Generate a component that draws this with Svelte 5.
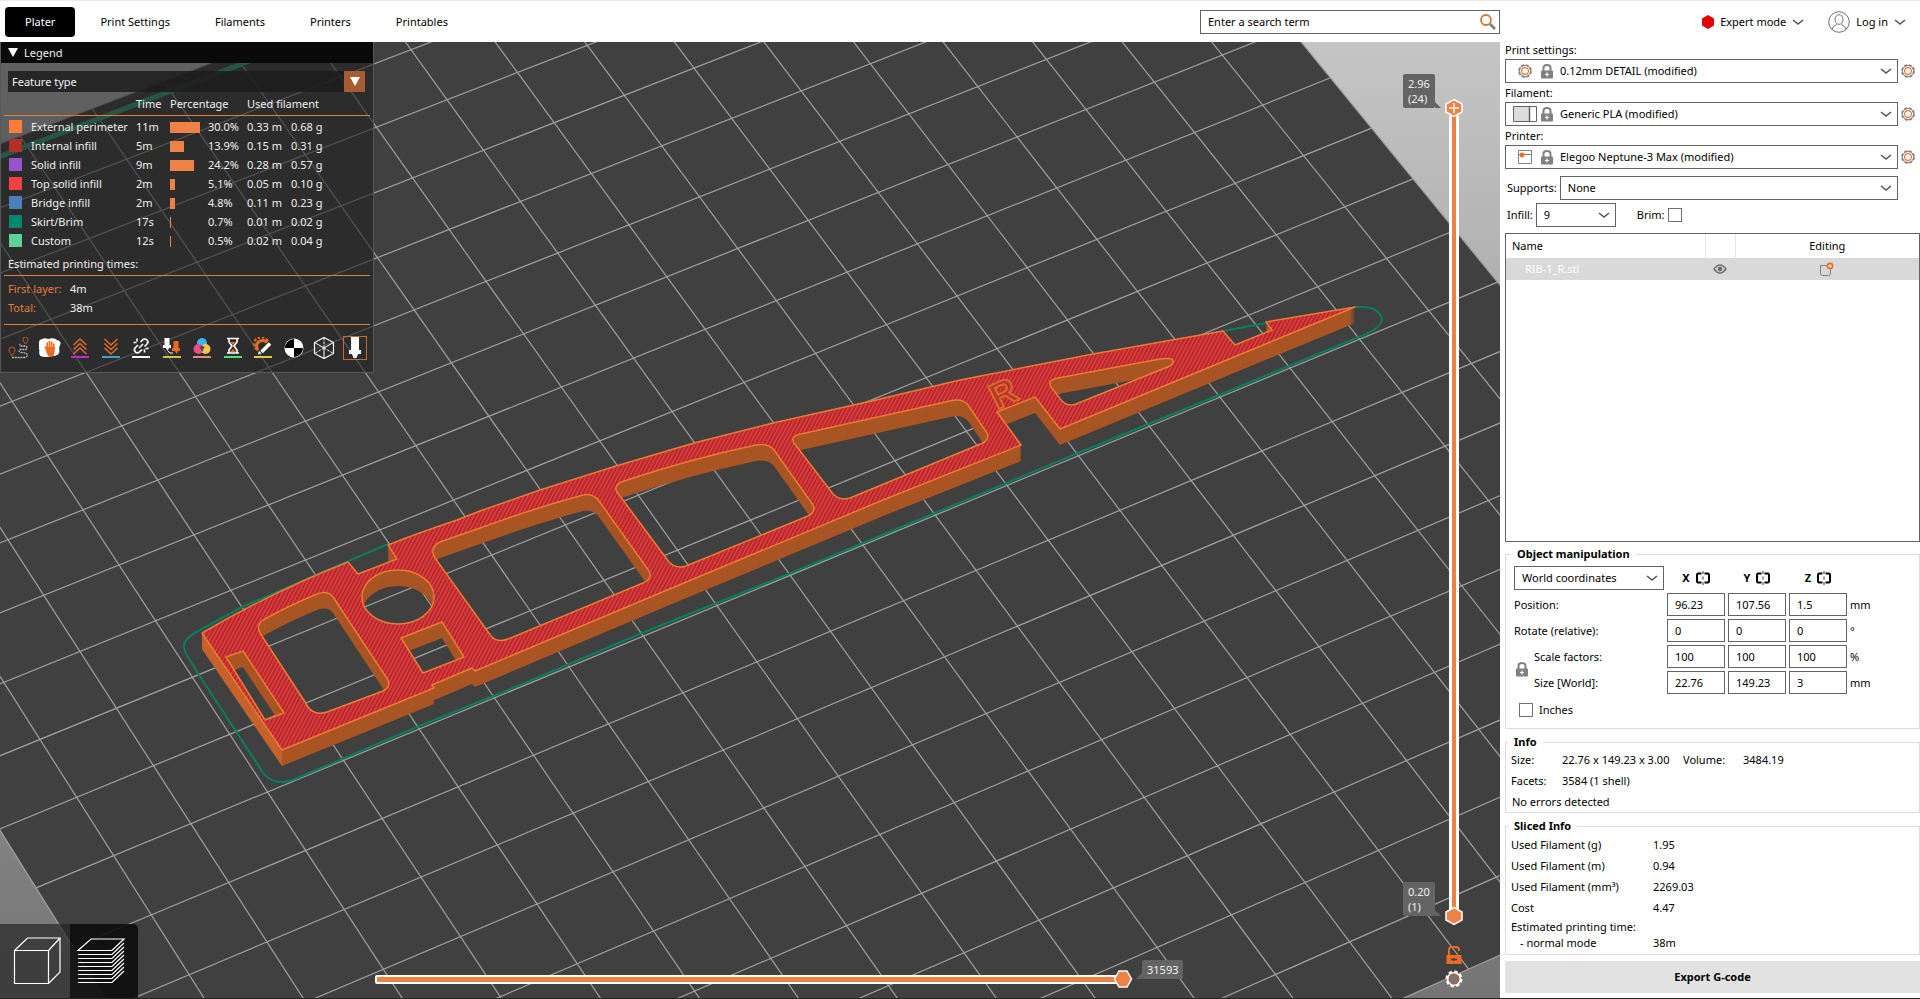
<script>
  const tabs = ['Plater', 'Print Settings', 'Filaments', 'Printers', 'Printables'];

  const features = [
    { color: '#ff7d38', name: 'External perimeter', time: '11m', pct: 30.0, len: '0.33 m', mass: '0.68 g' },
    { color: '#b1302a', name: 'Internal infill', time: '5m', pct: 13.9, len: '0.15 m', mass: '0.31 g' },
    { color: '#9654cc', name: 'Solid infill', time: '9m', pct: 24.2, len: '0.28 m', mass: '0.57 g' },
    { color: '#f04040', name: 'Top solid infill', time: '2m', pct: 5.1, len: '0.05 m', mass: '0.10 g' },
    { color: '#4d80ba', name: 'Bridge infill', time: '2m', pct: 4.8, len: '0.11 m', mass: '0.23 g' },
    { color: '#00876e', name: 'Skirt/Brim', time: '17s', pct: 0.7, len: '0.01 m', mass: '0.02 g' },
    { color: '#5ed194', name: 'Custom', time: '12s', pct: 0.5, len: '0.02 m', mass: '0.04 g' }
  ];

  const presets = [
    { id: 'print', label: 'Print settings:', value: '0.12mm DETAIL (modified)' },
    { id: 'filament', label: 'Filament:', value: 'Generic PLA (modified)' },
    { id: 'printer', label: 'Printer:', value: 'Elegoo Neptune-3 Max (modified)' }
  ];

  const transforms = [
    { name: 'Position', values: ['96.23', '107.56', '1.5'], unit: 'mm' },
    { name: 'Rotate', values: ['0', '0', '0'], unit: '°' },
    { name: 'Scale', values: ['100', '100', '100'], unit: '%' },
    { name: 'Size', values: ['22.76', '149.23', '3'], unit: 'mm' }
  ];
  const axes = ['X', 'Y', 'Z'];

  const sliced = [
    ['Used Filament (g)', '1.95'],
    ['Used Filament (m)', '0.94'],
    ['Used Filament (mm³)', '2269.03'],
    ['Cost', '4.47']
  ];

  // Perspective projection of bed cells (u to the right, v towards the viewer).
  function project(u, v) {
    const w = 1 + 0.003212 * u - 0.005672 * v;
    const x = (43.7 + 75.76 * u + 35.7 * v) / w;
    const y = (595.3 - 28.5 * u + 52.44 * v) / w;
    return `${x.toFixed(1)},${y.toFixed(1)}`;
  }
  const U = [-2, 18];
  const V = [-7, 13];
  const bed = `M${project(U[0], V[0])}L${project(U[1], V[0])}L${project(U[1], V[1])}L${project(U[0], V[1])}Z`;
  let grid = '';
  for (let u = U[0]; u <= U[1]; u++) grid += `M${project(u, V[0])}L${project(u, V[1])}`;
  for (let v = V[0]; v <= V[1]; v++) grid += `M${project(U[0], v)}L${project(U[1], v)}`;
  const purgeLine = `M${project(-2, -6.8)}L${project(16, -6.8)}`;

  const rib = [
    'M202,633 Q272,592 348,562 L358,574 L397,559 L388,545',
    'Q418,533 457,520 L480,511 L540,490 L616,466 L694,443 L773,423 L876,400 L960,380 L1093,354 L1223,331',
    'L1235,345 L1272,330 L1266,322 L1355,307',
    'L1060,429 L1035,397 L997,412 L1021,445 L883,500 L660,593 L475,671 L472,668 L432,685 L434,688 L282,750 Z',
    'M226,657 L243,651 L284,713 L265,720 Z',
    'M305,702 L260,633 Q256,625 263,620 Q290,605 317,594 Q328,590 333,597 L388,680 Q391,687 383,691 L327,712 Q314,716 307,706 Z',
    'M362,597 A36,27 0 1 1 434,597 A36,27 0 1 1 362,597 Z',
    'M401,638 L442,622 L464,657 L423,673 Z',
    'M435,558 Q429,548 440,542 L480,528 Q535,508 583,495 Q593,493 599,501 L649,571 Q653,579 643,583 L508,639 Q497,643 491,636 Z',
    'M617,492 Q613,485 624,481 Q690,459 756,445 Q768,443 774,450 L813,505 Q816,512 808,516 L686,566 Q676,569 669,562 Z',
    'M794,443 Q790,436 801,434 L950,401 Q962,398 968,405 L987,433 Q990,439 983,443 L850,498 Q840,501 833,494 Z',
    'M1051,387 Q1047,380 1058,378 L1160,359 Q1174,357 1173,362 Q1172,366 1165,368 L1076,404 Q1068,407 1062,401 Z'
  ].join(' ');
  const depth = Array.from({ length: 16 }, (_, i) => 16 - i);
  const skirt =
    'M388,544 L242,607 L200,630 Q184,638 184,646 Q184,652 190,660 L199,675 L260,768 Q268,783 284,782 Q292,781 300,777 L417,727 L520,685 L642,633 L791,573 L935,513 L1078,453 L1219,395 L1359,337 Q1382,328 1382,319 Q1378,305 1355,307 M1223,331 L1266,323';
</script>

{#snippet chevron()}
  <svg class="chev" width="12" height="8" viewBox="0 0 12 8" aria-hidden="true">
    <path d="M1 2l5 4 5-4" fill="none" stroke="#555" stroke-width="1.6" />
  </svg>
{/snippet}

{#snippet gear()}
  <svg width="16" height="16" viewBox="0 0 16 16" fill="none" aria-hidden="true">
    <circle cx="8" cy="8" r="6" stroke="#808080" stroke-width="1.8" stroke-dasharray="3.1 1.6" />
    <circle cx="8" cy="8" r="5.6" stroke="#888" stroke-width="1" />
    <path d="M8 4.4l2.6 1 1 2.6-1 2.6-2.6 1-2.6-1-1-2.6 1-2.6z" stroke="#ed6b21" stroke-width="1.1" />
  </svg>
{/snippet}

{#snippet lock()}
  <svg width="12" height="15" viewBox="0 0 12 15" aria-hidden="true">
    <path d="M2.5 7V3.6Q2.5 1 6 1t3.5 2.6V7" fill="none" stroke="#808080" stroke-width="2" />
    <rect y="6.5" width="12" height="8" rx="1" fill="#808080" />
    <path d="M6 8.5v4M4 10.5h4" stroke="#fff" stroke-width="1.2" />
  </svg>
{/snippet}

<div class="app">
  <header>
    <nav>
      {#each tabs as tab, i}
        <button class="tab" class:active={i === 0}>{tab}</button>
      {/each}
    </nav>
    <div class="search">
      <input type="text" aria-label="Search" value="Enter a search term" />
      <svg width="18" height="18" viewBox="0 0 18 18" fill="none" aria-hidden="true">
        <circle cx="7" cy="7" r="5" stroke="#dd7436" stroke-width="1.8" />
        <path d="M11 11l5 5" stroke="#808080" stroke-width="2.8" />
      </svg>
    </div>
    <div class="account">
      <button class="plain">
        <svg width="12" height="14" viewBox="0 0 12 14" aria-hidden="true"><path d="M6 0l6 3.5v7L6 14 0 10.5v-7z" fill="#e80000" /></svg>
        Expert mode {@render chevron()}
      </button>
      <button class="plain">
        <svg width="22" height="22" viewBox="0 0 22 22" fill="none" stroke="#707070" aria-hidden="true">
          <circle cx="11" cy="11" r="10.3" />
          <ellipse cx="11" cy="8.5" rx="4" ry="4.8" />
          <path d="M4 18.5q.5-3.5 4.7-5M18 18.5q-.5-3.500-4.7-5" />
        </svg>
        Log in {@render chevron()}
      </button>
    </div>
  </header>

  <main>
    <section class="canvas" aria-label="Preview">
      <svg class="scene" viewBox="0 42 1500 956" preserveAspectRatio="xMinYMin slice" aria-hidden="true">
        <defs>
          <linearGradient id="sky" x1="0" y1="0" x2="0" y2="1">
            <stop offset="0" stop-color="#c5c5c5" />
            <stop offset="1" stop-color="#747474" />
          </linearGradient>
          <pattern id="hatch" width="3.5" height="4" patternUnits="userSpaceOnUse" patternTransform="rotate(28)">
            <rect width="3.5" height="4" fill="#e23a3c" />
            <rect width="1.6" height="4" fill="#a6282b" />
          </pattern>
        </defs>
        <rect y="42" width="1500" height="956" fill="url(#sky)" />
        <path d={bed} fill="#404040" />
        <path d={grid} fill="none" stroke="#a0a0a0" stroke-width="1.2" />
        <path d={purgeLine} stroke="#2fa878" stroke-width="5" />
        <path d={skirt} fill="none" stroke="#087d62" stroke-width="2" />
        {#each depth as dy}
          <path d={rib} transform="translate(0 {dy})" fill="#a95524" fill-rule="evenodd" />
        {/each}
        <path d="M202,633 L282,750 V766 L202,649 Z" fill="#c4622a" />
        <path d={rib} fill="url(#hatch)" fill-rule="evenodd" stroke="#ec7a33" stroke-width="1.5" stroke-linejoin="round" />
        <text class="engraved" x="997" y="410" transform="rotate(-26 997 410)">R</text>
      </svg>

      <div class="legend">
        <button class="legend-head">
          <svg width="10" height="9" viewBox="0 0 10 9" aria-hidden="true"><path d="M0 0h10L5 9z" fill="#fff" /></svg>
          Legend
        </button>
        <div class="feature">
          <select aria-label="View type"><option>Feature type</option></select>
          <span class="drop"><svg width="10" height="9" viewBox="0 0 10 9" aria-hidden="true"><path d="M0 0h10L5 9z" fill="#fff" /></svg></span>
        </div>
        <table>
          <thead>
            <tr><th class="c1"></th><th class="c2">Time</th><th class="c3" colspan="2">Percentage</th><th colspan="2">Used filament</th></tr>
          </thead>
          <tbody>
            {#each features as f}
              <tr>
                <td class="c1"><span class="swatch" style="background:{f.color}"></span>{f.name}</td>
                <td class="c2">{f.time}</td>
                <td class="c3"><span class="bar" style="width:{Math.max(1, Math.round(f.pct))}px"></span></td>
                <td class="c4">{f.pct.toFixed(1)}%</td>
                <td class="c5">{f.len}</td>
                <td>{f.mass}</td>
              </tr>
            {/each}
          </tbody>
        </table>
        <p class="times-title">Estimated printing times:</p>
        <dl>
          <dt>First layer:</dt><dd>4m</dd>
          <dt>Total:</dt><dd>38m</dd>
        </dl>
        <div class="tools">
          <button aria-label="Travel">
            <svg width="22" height="22" viewBox="0 0 22 22" fill="none">
              <path d="M4 19q-3-4-3-6a3 3 0 0 1 6 0q0 2-3 6zM17.5 7q-2.5-3-2.5-4.5a2.5 2.5 0 0 1 5 0Q20 4 17.5 7z" stroke="#c45a24" />
              <path d="M4 20.5h13q3-1 2-3.5-1-1.5-7-1.5-2-2 0-3h6q2-2 0-3.5h-5q-2-1-.5-2" stroke="#bbb" stroke-width="1.300" stroke-dasharray="2 .8" />
            </svg>
          </button>
          <button aria-label="Wipe">
            <svg width="22" height="22" viewBox="0 0 22 22">
              <path d="M1 3q4-3 8-1 6-2 9 1 4 1 3.500 4-2 4-1 7 0 5-7 5-8 2-12 0-2-2-1-6Q-2 7 1 3z" fill="#fff" />
              <path d="M7 13l-2-3.500q1.200-1 3 1.500v0z" fill="#ed6b21" />
              <path d="M8.200 12V6M10.400 12V4.500M12.600 12V5M14.800 12V7" stroke="#ed6b21" stroke-width="1.700" stroke-linecap="round" />
              <path d="M6.500 12l1-2h8.200v4.500Q15 20 11.500 20 8.500 20 6.500 12z" fill="#ed6b21" />
            </svg>
          </button>
          <button aria-label="Retractions">
            <svg width="22" height="22" viewBox="0 0 22 22" fill="none"><path d="M4.500 8L11 2l6.500 6M4.500 12.500L11 6.500l6.500 6M4.500 17L11 11l6.500 6" stroke="#e06a24" stroke-width="1.600" /><path d="M2 20h18" stroke="#c32ac3" stroke-width="2" /></svg>
          </button>
          <button aria-label="Deretractions">
            <svg width="22" height="22" viewBox="0 0 22 22" fill="none"><path d="M4.500 2L11 8l6.500-6M4.500 6.500L11 12.500l6.500-6M4.500 11L11 17l6.500-6" stroke="#e06a24" stroke-width="1.600" /><path d="M2 20h18" stroke="#44a4c6" stroke-width="2" /></svg>
          </button>
          <button aria-label="Seams">
            <svg width="22" height="22" viewBox="0 0 22 22" fill="none" stroke="#fff" stroke-width="1.600"><path d="M10.500 5l2-2a3 3 0 0 1 4.500 4l-2.500 2.500M8 8L5.500 10.500a3 3 0 0 0 4 4.500l2.500-2.500M9 11l4-4M7 1.500v3M3.500 5.500h3M14.500 12.500v3M15.500 11.500h3" /><path d="M2 20h18" stroke-width="2" /></svg>
          </button>
          <button aria-label="Tool changes">
            <svg width="22" height="22" viewBox="0 0 22 22"><path d="M3.500 1h5v7h1.500v3H8L6.500 14 5 11H2V8h1.500z" fill="#fff" /><path d="M12.500 4h5v7H19v3h-2l-1.500 3-1.500-3h-3v-3h1.500z" fill="#ed6b21" /><path d="M7 14q1 3 5 2" fill="none" stroke="#fff" /><path d="M2 20h18" stroke="#d1c43c" stroke-width="2" /></svg>
          </button>
          <button aria-label="Color changes">
            <svg width="22" height="22" viewBox="0 0 22 22"><circle cx="11" cy="6" r="5" fill="#3eb4ee" /><circle cx="7.500" cy="12" r="5" fill="#ee4a8c" /><circle cx="14.500" cy="12" r="5" fill="#f4c64a" /><path d="M11 8.500l2.500 1.500-2.500 5.500L8.500 10z" fill="#594a44" /><path d="M2 20h18" stroke="#e38d81" stroke-width="2" /></svg>
          </button>
          <button aria-label="Print pauses">
            <svg width="22" height="22" viewBox="0 0 22 22" fill="none"><path d="M5 1.500h12M5 16h12M7 2v3l3 4-3 4v3M15 2v3l-3 4 3 4v3" stroke="#fff" stroke-width="1.600" /><path d="M8.500 5h5L11 8zM8 15l3-3 3 3z" fill="#ed6b21" /><path d="M2 20h18" stroke="#4ce27c" stroke-width="2" /></svg>
          </button>
          <button aria-label="Custom G-codes">
            <svg width="22" height="22" viewBox="0 0 22 22" fill="none"><path d="M6 13A5.500 5.500 0 1 1 15 5.500" stroke="#ed6b21" stroke-width="3" /><path d="M5 12.500A7 7 0 1 1 16 5" stroke="#ed6b21" stroke-width="2.500" stroke-dasharray="2.500 2" /><path d="M9.500 15L18 6.500" stroke="#fff" stroke-width="3.500" /><path d="M6 17.500l1-3.500 2.500 2.500z" fill="#fff" /><path d="M2 20h18" stroke="#e0cc3c" stroke-width="2" /></svg>
          </button>
          <button aria-label="Center of gravity">
            <svg width="22" height="22" viewBox="0 0 22 22"><circle cx="11" cy="11" r="9.500" fill="#fff" /><path d="M11 11V2a9 9 0 0 0-9 9zM11 11v9a9 9 0 0 0 9-9z" fill="#000" /></svg>
          </button>
          <button aria-label="Shells">
            <svg width="22" height="22" viewBox="0 0 22 22" fill="none" stroke="#fff"><path d="M11 0.500l9.500 5v11l-9.500 5-9.500-5v-11z" stroke-width="1.200" /><path d="M11 11v10M11 11l9.500-5.500M11 11L1.500 5.500" /><path d="M11 1v10M11 11l-9.500 5.500M11 11l9.500 5.500" stroke-dasharray="2.500 1.200" /></svg>
          </button>
          <button aria-label="Tool marker" class="on">
            <svg width="22" height="22" viewBox="0 0 22 22"><path d="M7 0h8v13h2v4h-3l-1.500 4h-3L8 17H5v-4h2z" fill="#fff" /></svg>
          </button>
        </div>
      </div>

      <div class="views">
        <button aria-label="3D editor view">
          <svg width="70" height="74" viewBox="0 0 70 74" fill="none" stroke="#fff" stroke-width="1.200"><path d="M14.500 26.500h34v33h-34zM14.500 26.500l13-12.500h32.500l-11.500 12.500M60 14v34L48.500 59.500" /></svg>
        </button>
        <button aria-label="Preview" class="on">
          <svg width="68" height="74" viewBox="0 0 68 74" fill="none" stroke="#fff" stroke-width="1.200">
            <path d="M8 26.500h34L54 15H21z" />
            {#each [30, 34, 38, 42, 46, 50, 54, 58] as y}<path d="M8 {y}.5h34l12-11.500" />{/each}
          </svg>
        </button>
      </div>

      <div class="moves">
        <div class="track"></div>
        <svg class="knob" width="20" height="20" viewBox="0 0 20 20" aria-hidden="true"><path d="M1.500 10L6 2h8l4.500 8L14 18H6z" fill="#ed8146" stroke="#fff" stroke-width="1.500" /></svg>
        <input type="range" aria-label="Moves" min="0" max="31593" value="31593" />
        <output class="tip">31593</output>
      </div>

      <div class="layers">
        <div class="track"></div>
        <svg class="knob top" width="20" height="20" viewBox="0 0 20 20" aria-hidden="true"><path d="M10 1.500L18 6v8l-8 4.500L2 14V6z" fill="#ed8146" stroke="#fff" stroke-width="1.500" /><path d="M10 5v10M5 10h10" stroke="#fff" stroke-width="1.300" /></svg>
        <svg class="knob low" width="20" height="20" viewBox="0 0 20 20" aria-hidden="true"><path d="M10 1.500L18 6v8l-8 4.500L2 14V6z" fill="#ed8146" stroke="#fff" stroke-width="1.500" /></svg>
        <input type="range" aria-label="Upper layer" min="1" max="24" value="24" />
        <output class="tip top">2.96<br />(24)</output>
        <output class="tip low">0.20<br />(1)</output>
      </div>
      <div class="layer-tools">
        <button aria-label="Lock layers">
          <svg width="16" height="18" viewBox="0 0 16 18"><path d="M3 9V4q0-3 3-3h4q3 0 3 3v1" fill="none" stroke="#ed6b21" stroke-width="2" /><path d="M.5 9h15v9H.5z" fill="#ed6b21" /><path d="M5 13.500h6M8 12v3" stroke="#404040" stroke-width="1.600" /></svg>
        </button>
        <button aria-label="Slider options">
          <svg width="18" height="18" viewBox="0 0 18 18" fill="none"><circle cx="9" cy="9" r="7.500" stroke="#fff" stroke-width="2" stroke-dasharray="3.500 2.390" /><circle cx="9" cy="9" r="6.300" stroke="#fff" stroke-width="1.600" /><circle cx="9" cy="9" r="4.500" fill="#777" stroke="#b0633c" stroke-width="1.400" /></svg>
        </button>
      </div>
    </section>

    <aside>
      {#each presets as p}
        <label class="preset-label" for={p.id}>{p.label}</label>
        <div class="preset">
          <div class="combo">
            <span class="icons">
              {#if p.id === 'print'}
                <span class="kind">{@render gear()}</span>
              {:else if p.id === 'filament'}
                <span class="kind"><svg width="24" height="16" viewBox="0 0 24 16" aria-hidden="true"><path d="M.5.5h23v15H.5z" fill="#fff" stroke="#646464" /><path d="M1 1h15v14H1z" fill="#dcdcdc" /><path d="M16.500 0v16" stroke="#646464" stroke-width="1.500" /></svg></span>
              {:else}
                <span class="kind"><svg width="14" height="14" viewBox="0 0 14 14" fill="none" aria-hidden="true"><path d="M.5.5h13v13H.5zM.5 4.500h13" stroke="#808080" /><circle cx="4" cy="5" r="2.400" fill="#ed6b21" /></svg></span>
              {/if}
              {@render lock()}
            </span>
            <select id={p.id}><option>{p.value}</option></select>
            {@render chevron()}
          </div>
          <button class="plain" aria-label="Edit {p.label}">{@render gear()}</button>
        </div>
      {/each}

      <div class="row supports">
        <label for="supports">Supports:</label>
        <div class="combo"><select id="supports"><option>None</option></select>{@render chevron()}</div>
      </div>
      <div class="row">
        <label for="infill">Infill:</label>
        <div class="combo infill"><select id="infill"><option>9</option></select>{@render chevron()}</div>
        <label class="brim" for="brim">Brim:</label>
        <input type="checkbox" id="brim" />
      </div>

      <div class="objects">
        <table>
          <thead><tr><th>Name</th><th class="eye"></th><th class="edit">Editing</th></tr></thead>
          <tbody>
            <tr>
              <td class="file">RIB-1_R.stl</td>
              <td class="eye"><svg width="14" height="10" viewBox="0 0 14 10" aria-hidden="true"><path d="M1 5q6-8 12 0-6 8-12 0z" fill="none" stroke="#707070" stroke-width="1.500" /><circle cx="7" cy="5" r="2.400" fill="#707070" /></svg></td>
              <td class="edit"><svg width="14" height="14" viewBox="0 0 14 14" fill="none" aria-hidden="true"><path d="M6.500 3.500h-6v8q0 2 2 2h6q2 0 2-2v-4" stroke="#808080" /><circle cx="10" cy="4" r="2.600" stroke="#ed6b21" stroke-width="1.600" /></svg></td>
            </tr>
          </tbody>
        </table>
      </div>

      <fieldset class="manip">
        <legend>Object manipulation</legend>
        <div class="grid">
          <div class="combo coords"><select aria-label="Coordinates"><option>World coordinates</option></select>{@render chevron()}</div>
          {#each axes as a}
            <div class="axis">{a}
              <svg width="14" height="14" viewBox="0 0 14 14" fill="none" aria-hidden="true"><path d="M5.500 2.500H2L1 3.500v7l1 1h3.500M8.500 2.500H12l1 1v7l-1 1H8.500" stroke="#000" stroke-width="2" /><path d="M7 0v3M7 5.500v3M7 11v3" stroke="#808080" stroke-width="1.600" /></svg>
            </div>
          {/each}
          <span></span>
          <span class="l2">Position:</span>
          <span class="l3">Rotate (relative):</span>
          <div class="scale">
            <button class="plain" aria-label="Lock scaling">{@render lock()}</button>
            <span>Scale factors:</span>
            <span>Size [World]:</span>
          </div>
          {#each transforms as t, r}
            {#each t.values as v, c}
              <input type="text" aria-label="{t.name} {axes[c]}" value={v} style="grid-area:{r + 2}/{c + 2}" />
            {/each}
            <span style="grid-area:{r + 2}/5">{t.unit}</span>
          {/each}
        </div>
        <div class="inches"><input type="checkbox" id="inches" /><label for="inches">Inches</label></div>
      </fieldset>

      <fieldset class="info">
        <legend>Info</legend>
        <div class="line"><span>Size:</span><span>22.76 x 149.23 x 3.00</span><span>Volume:</span><span>3484.19</span></div>
        <div class="line"><span>Facets:</span><span>3584 (1 shell)</span></div>
        <div class="line status">No errors detected</div>
      </fieldset>

      <fieldset class="sliced">
        <legend>Sliced Info</legend>
        {#each sliced as [k, v]}
          <div class="pair"><span>{k}</span><span>{v}</span></div>
        {/each}
        <div class="pair tall"><span>Estimated printing time:<br /><span class="normal">- normal mode</span></span><span class="end">38m</span></div>
      </fieldset>

      <button class="export">Export G-code</button>
    </aside>
  </main>
</div>

<style>
  :global(body) { margin: 0; }
  .app {
    display: grid;
    grid-template-rows: 42px 1fr;
    min-height: 100vh;
    box-sizing: border-box;
    border-bottom: 1px solid #2a2222;
    background: #fff;
    color: #000;
    font: 11px/16px 'Noto Sans', 'Open Sans', sans-serif;
  }
  .app * { box-sizing: border-box; }
  svg { display: block; flex: none; }
  button, input, select { font: inherit; color: inherit; margin: 0; border-radius: 0; }
  button { border: 0; padding: 0; background: none; }

  header { display: flex; align-items: center; border-top: 1px solid #ececec; padding-left: 5px; }
  nav { display: flex; gap: 5px; flex: 1; }
  .tab { height: 30px; padding: 0 20px; border-radius: 4px; }
  .tab.active { background: #000; color: #fff; }
  .search { width: 300px; height: 24px; display: flex; align-items: center; border: 1px solid #646464; padding-right: 2px; }
  .search input { flex: 1; min-width: 0; border: 0; outline: 0; padding: 0 7px; background: none; }
  .account { width: 420px; display: flex; justify-content: flex-end; gap: 24px; padding-right: 14px; }
  .plain { display: flex; align-items: center; gap: 6px; }

  main { display: flex; min-height: 0; }
  .canvas { flex: 1; min-width: 0; position: relative; overflow: hidden; background: #404040; }
  .scene { position: absolute; inset: 0; width: 100%; height: 100%; }
  .engraved { font: bold 36px 'Liberation Sans', sans-serif; fill: #b5362c; stroke: #d86a2c; stroke-width: 2px; }

  .legend {
    position: absolute; left: 0; top: 0; width: 374px; height: 331px;
    background: rgba(32, 32, 32, 0.6); border: 1px solid #55585c; border-top: 0;
    color: #f0f0f0; display: flex; flex-direction: column;
  }
  .legend-head { height: 21px; background: #0a0a0a; display: flex; align-items: center; gap: 6px; padding-left: 7px; }
  .feature { margin: 8px 8px 0 7px; height: 21px; display: flex; background: rgba(28, 28, 28, 0.85); }
  .feature select { flex: 1; appearance: none; border: 0; background: none; padding: 0 4px; }
  .drop { width: 21px; display: grid; place-items: center; background: #a85c32; pointer-events: none; }
  .legend table { margin: 1px 3px 0; border-collapse: collapse; table-layout: fixed; }
  .legend th, .legend td { padding: 0; height: 19px; line-height: 16px; font-weight: normal; text-align: left; white-space: nowrap; }
  .legend th { height: 22px; border-bottom: 1px solid #e57b3e; }
  .legend tbody::before { content: ''; display: block; height: 2px; }
  .legend .c1 { width: 132px; padding-left: 5px; }
  .c2 { width: 34px; }
  .c3 { width: 38px; }
  .c4 { width: 39px; }
  .c5 { width: 44px; }
  .swatch { display: inline-block; width: 13px; height: 13px; margin-right: 9px; vertical-align: -2px; }
  .bar { display: block; height: 11px; background: #ed8146; }
  .times-title { margin: 5px 3px 0; padding-left: 4px; height: 20px; border-bottom: 1px solid #e57b3e; }
  dl { margin: 3px 3px 0; padding: 0 4px 7px; display: grid; grid-template-columns: 62px 1fr; line-height: 19px; border-bottom: 1px solid #e57b3e; }
  dt { color: #e57b3e; }
  dd { margin: 0; }
  .tools { margin: 11px 6px 0; display: flex; justify-content: space-between; }
  .tools button { width: 24px; height: 24px; display: grid; place-items: center; border: 1px solid transparent; }
  .tools .on { border-color: #c4693a; }

  .views { position: absolute; left: 0; bottom: 0; display: flex; }
  .views button { background: rgba(32, 32, 32, 0.65); }
  .views .on { background: rgba(10, 10, 10, 0.88); border-top-right-radius: 5px; }

  .track { position: absolute; background: #ed8146; border: 2px solid #fff; border-radius: 2px; }
  .knob { position: absolute; }
  .moves { position: absolute; left: 375px; right: 377px; bottom: 9px; height: 20px; }
  .moves .track { left: 0; right: 4px; top: 6px; height: 9px; }
  .moves .knob { right: -10px; top: 0; }
  .moves input { position: absolute; inset: 0; width: 100%; height: 20px; opacity: 0; }
  .tip { position: absolute; background: #646464; color: #f0f0f0; border-radius: 2px; padding: 2px 5px; line-height: 15px; }
  .tip::after { content: ''; position: absolute; bottom: 0; border: 3px solid transparent; border-bottom-color: #646464; }
  .moves .tip { left: 100%; margin-left: 19px; bottom: 10px; }
  .moves .tip::after { left: -6px; border-right-color: #646464; }
  .layers { position: absolute; right: 36px; top: 56px; bottom: 72px; width: 20px; }
  .layers .track { left: 5px; width: 10px; top: 17px; bottom: 10px; border-width: 1px 3px; }
  .layers .top { top: 0; }
  .layers .low { bottom: 0; }
  .layers input { position: absolute; inset: 0; width: 20px; height: 100%; opacity: 0; writing-mode: vertical-lr; }
  .layers .tip { right: 29px; width: 32px; white-space: nowrap; }
  .layers .tip.top { top: -24px; }
  .layers .tip.low { bottom: 10px; }
  .layers .tip::after { right: -6px; border-left-color: #646464; }
  .layer-tools { position: absolute; right: 37px; bottom: 10px; width: 18px; display: grid; justify-items: center; gap: 6px; }

  aside { width: 420px; flex: none; padding-left: 5px; display: flex; flex-direction: column; }
  .preset-label { height: 17px; padding-bottom: 1px; }
  .preset { display: flex; align-items: center; gap: 2px; margin-bottom: 2px; }
  .preset .combo { width: 393px; }
  .combo { position: relative; height: 24px; display: flex; }
  .combo select { flex: 1; min-width: 0; appearance: none; background: #fff; border: 1px solid #646464; padding: 0 7px; outline: 0; }
  .preset select { padding-left: 54px; }
  .combo .chev { position: absolute; right: 6px; top: 8px; pointer-events: none; }
  .icons { position: absolute; left: 7px; top: 0; height: 24px; display: flex; align-items: center; gap: 4px; pointer-events: none; }
  .kind { width: 25px; display: grid; place-items: center; }
  .row { display: flex; align-items: center; gap: 3px; padding: 0 22px 0 2px; margin-bottom: 3px; }
  .supports { margin-top: 5px; }
  .supports .combo { flex: 1; }
  .infill { width: 80px; }
  .brim { margin-left: 18px; }
  input[type='checkbox'] { appearance: none; width: 14px; height: 14px; border: 1px solid #707070; background: #fff; }

  .objects { flex: 1; margin-top: 3px; border: 1px solid #646464; }
  .objects table { width: 100%; border-collapse: collapse; }
  .objects th { height: 24px; padding: 0 6px; font-weight: normal; text-align: left; }
  .objects td { height: 22px; padding: 0; background: #d9d9d9; }
  .objects .eye { width: 30px; padding: 0 8px; }
  .objects th.eye { border: 1px solid #e5e5e5; border-width: 0 1px; }
  .objects .edit { width: 184px; text-align: center; }
  .objects .edit svg { margin: 0 auto; }
  .objects .file { padding-left: 19px; color: #fff; }

  fieldset { margin: 0; padding: 0; border: 1px solid #dcdcdc; min-width: 0; }
  legend { font-weight: bold; padding: 0 6px; line-height: 16px; }
  .manip { margin-top: 4px; height: 183px; }
  .manip legend { margin-left: 5px; }
  .info legend, .sliced legend { margin-left: 2px; }
  .grid { display: grid; grid-template-columns: 150px 58px 58px 58px 1fr; grid-template-rows: 24px repeat(4, 23px); gap: 3px; padding: 4px 8px 0; align-items: center; }
  .grid input { width: 100%; height: 23px; border: 1px solid #646464; padding: 0 7px; background: #fff; }
  .axis { display: flex; align-items: center; justify-content: center; gap: 6px; font-weight: bold; }
  .l2 { grid-area: 2/1; }
  .l3 { grid-area: 3/1; }
  .scale { grid-area: 4/1/6/2; display: grid; grid-template: 23px 23px / 17px 1fr; gap: 3px; align-items: center; }
  .scale button { grid-row: 1/3; padding-left: 2px; }
  .inches { display: flex; align-items: center; gap: 6px; padding: 8px 13px; }
  .info { margin-top: 5px; height: 79px; }
  .line { display: grid; grid-template-columns: 51px 121px 60px 1fr; padding-left: 5px; height: 21px; line-height: 20px; }
  .status { display: block; padding-left: 6px; }
  .sliced { margin-top: 5px; height: 137px; }
  .pair { display: grid; grid-template-columns: 142px 1fr; padding-left: 5px; line-height: 21px; }
  .pair.tall { line-height: 16px; padding-top: 1px; }
  .normal { padding-left: 9px; }
  .end { align-self: end; }
  .export { height: 32px; margin: 6px 0 5px; background: #e2e2e2; font-weight: bold; }
</style>
